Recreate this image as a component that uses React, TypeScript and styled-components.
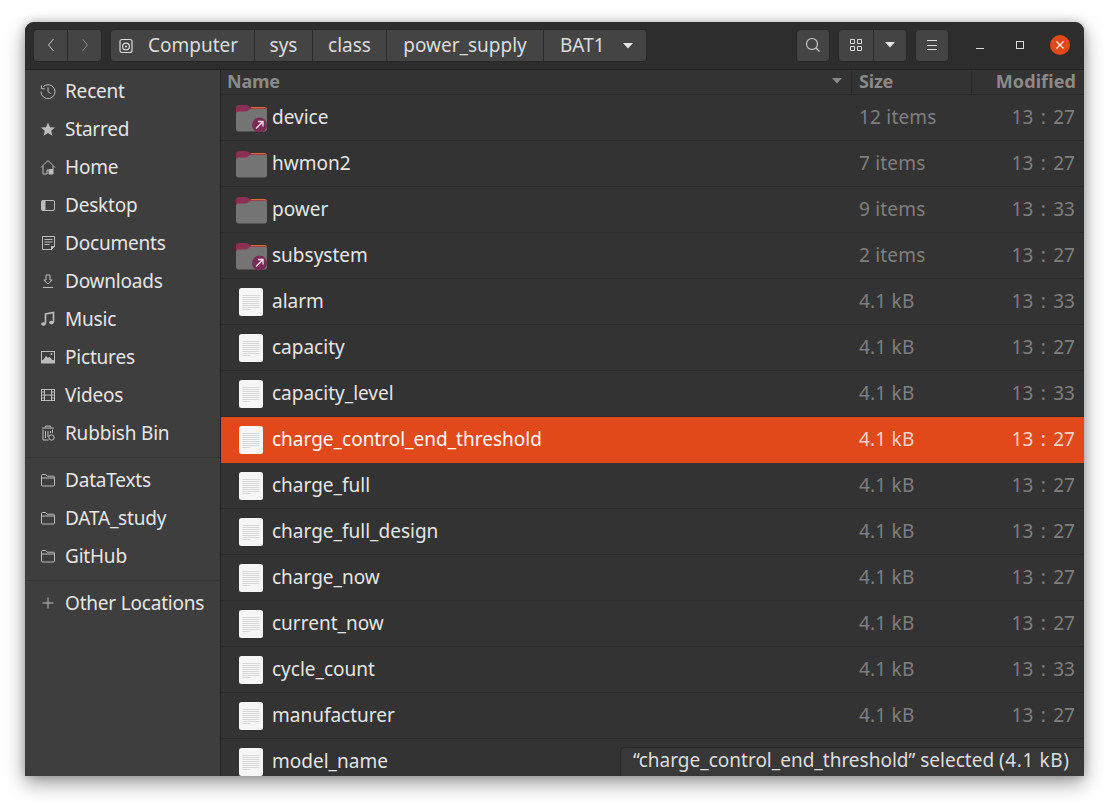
import React from "react";
import styled, { createGlobalStyle, css } from "styled-components";

const Global = createGlobalStyle`
  html, body { margin: 0; padding: 0; background: #fff; }
  body { width: 1109px; height: 804px; overflow: hidden; font-family: "Noto Sans", "Liberation Sans", sans-serif; }
  #root { width: 1109px; height: 804px; }
`;

const Desktop = styled.div`
  width: 1109px;
  height: 804px;
  padding: 22px 25px 28px 25px;
  box-sizing: border-box;
  background: #fff;
`;
const WindowFrame = styled.div`
  width: 1059px;
  height: 754px;
  border-radius: 9px 9px 0 0;
  box-shadow: 0 7px 20px rgba(0,0,0,.4), 0 0 8px rgba(0,0,0,.2);
`;
const Window = styled.div`
  position: relative;
  width: 1059px;
  height: 754px;
  border-radius: 9px 9px 0 0;
  overflow: hidden;
  display: flex;
  flex-direction: column;
  background: #333;
`;
const HeaderBar = styled.header`
  height: 48px;
  flex: none;
  box-sizing: border-box;
  display: flex;
  align-items: center;
  background: #2d2d2d;
  border-bottom: 1px solid #202020;
  padding: 0 14px 1px 8px;
`;
const Group = styled.div<{ $ml?: number }>`
  display: flex;
  height: 33px;
  margin-left: ${p => p.$ml ?? 0}px;
  border-radius: 4px;
  background: #444;
  border: 1px solid #272727;
  box-sizing: border-box;
  overflow: hidden;
`;
const ToolButton = styled.div<{ $w: number; $divider?: boolean }>`
  width: ${p => p.$w}px;
  display: flex;
  align-items: center;
  justify-content: center;
  ${p => p.$divider && css`border-right: 1px solid #2a2a2a;`}
`;
const Crumb = styled.div<{ $w: number; $last?: boolean; $pad?: number }>`
  width: ${p => p.$w}px;
  box-sizing: border-box;
  display: flex;
  align-items: center;
  justify-content: ${p => p.$pad ? "flex-start" : "center"};
  padding: 0 0 0 ${p => p.$pad ?? 0}px;
  font-size: 19px;
  color: #dcdcdc;
  ${p => !p.$last && css`border-right: 1px solid #2a2a2a;`}
`;
const CrumbIconWrap = styled.span`
  display: flex;
  margin: 1px 15px 0 0;
`;
const CaretWrap = styled.span`
  display: flex;
  margin: 1px 0 0 18px;
`;
const Spacer = styled.div`flex: 1;`;
const WinControls = styled.div`
  display: flex;
  align-items: center;
  margin-left: 27px;
  width: 94px;
`;
const WinGlyph = styled.span<{ $ml?: number }>`
  display: flex;
  margin-left: ${p => p.$ml ?? 0}px;
`;
const CloseDot = styled.div`
  width: 20px;
  height: 20px;
  margin-left: 26px;
  border-radius: 50%;
  background: #e2491a;
  display: flex;
  align-items: center;
  justify-content: center;
`;
const Body = styled.div`
  flex: 1;
  min-height: 0;
  display: flex;
`;
const Sidebar = styled.nav`
  width: 196px;
  flex: none;
  box-sizing: border-box;
  background: #3e3e3e;
  border-right: 1px solid #222;
  padding-top: 2px;
`;
const SideItem = styled.div`
  height: 38px;
  display: flex;
  align-items: center;
  padding-left: 14px;
  gap: 9px;
  font-size: 19px;
  letter-spacing: -0.2px;
  color: #e6e6e6;
  white-space: nowrap;
`;
const SideIcon = styled.span`
  width: 17px;
  display: flex;
  justify-content: center;
  flex: none;
`;
const SideSep = styled.div`
  height: 1px;
  margin: 5px 0 3px;
  background: #343434;
`;
const Main = styled.main`
  flex: 1;
  min-width: 0;
  display: flex;
  flex-direction: column;
  background: #333;
`;
const ColHeads = styled.div`
  height: 25px;
  flex: none;
  box-sizing: border-box;
  display: flex;
  border-bottom: 1px solid #282828;
  font-size: 18px;
  font-weight: 700;
  color: #8a8a8a;
`;
const ColHead = styled.div<{ $w?: number; $right?: boolean }>`
  ${p => p.$w ? css`width: ${p.$w}px; flex: none;` : css`flex: 1;`}
  box-sizing: border-box;
  display: flex;
  align-items: center;
  justify-content: ${p => p.$right ? "flex-end" : "space-between"};
  padding: 0 ${p => p.$right ? 8 : 9}px 2px 7px;
  letter-spacing: ${p => p.$right ? 0.1 : -0.2}px;
  border-right: 1px solid #292929;
  &:last-child { border-right: 0; }
`;
const NameHead = styled(ColHead)`
  padding-left: 6px;
`;
const Rows = styled.div`
  flex: 1;
  min-height: 0;
  overflow: hidden;
`;
const Row = styled.div<{ $sel?: boolean }>`
  height: 46px;
  box-sizing: border-box;
  display: flex;
  align-items: center;
  font-size: 19px;
  border-bottom: 1px solid ${p => p.$sel ? "transparent" : "#2b2b2b"};
  color: ${p => p.$sel ? "#fff" : "#e6e6e6"};
  background: ${p => p.$sel ? "#e2491a" : "transparent"};
`;
const IconCell = styled.div`
  width: 51px;
  flex: none;
  padding-left: 15px;
  box-sizing: border-box;
  display: flex;
`;
const NameCell = styled.div`
  flex: 1;
  min-width: 0;
  padding-bottom: 2px;
`;
const SizeCell = styled.div<{ $sel?: boolean }>`
  width: 120px;
  flex: none;
  box-sizing: border-box;
  padding: 0 0 2px 7px;
  letter-spacing: 0.2px;
  color: ${p => p.$sel ? "#f4d5c8" : "#7f7f7f"};
`;
const TimeCell = styled.div<{ $sel?: boolean }>`
  width: 112px;
  flex: none;
  box-sizing: border-box;
  padding: 0 9px 2px 0;
  text-align: right;
  color: ${p => p.$sel ? "#f4d5c8" : "#7f7f7f"};
  word-spacing: 2.5px;
`;
const Floating = styled.div`
  position: absolute;
  right: 0;
  bottom: 0;
  width: 464px;
  height: 29px;
  box-sizing: border-box;
  background: #383838;
  border: 1px solid #262626;
  border-right: 0;
  border-bottom: 0;
  border-top-left-radius: 5px;
  font-size: 19px;
  color: #dedede;
  line-height: 25px;
  padding-left: 12px;
  white-space: nowrap;
`;
const FloatSize = styled.span`
  letter-spacing: 0.6px;
`;

const S = "#bdbdbd";
const Stroke = { fill: "none", stroke: S, strokeWidth: 1 } as const;

const Ic = ({ children, w = 16, h = 16 }: { children: React.ReactNode; w?: number; h?: number }) => (
  <svg width={w} height={h} viewBox={`0 0 ${w} ${h}`} style={{ display: "block" }}>{children}</svg>
);

const icons: Record<string, React.ReactNode> = {
  recent: <Ic><path d="M3.2 3.6A7 7 0 1 1 1 8.5" {...Stroke} /><path d="M1.5 2.5v3.3h3.3" {...Stroke} /><path d="M8 4.2v4.4l2.7 2" {...Stroke} /></Ic>,
  star: <Ic><path d="M8 1.6l2 4.6 5 .4-3.8 3.2 1.2 4.9L8 12.1l-4.4 2.6 1.2-4.9L1 6.6l5-.4z" fill={S} /></Ic>,
  home: <Ic><path d="M1 8.5L8 1.5l7 7" {...Stroke} /><path d="M3 7v8h4V11h2v4h4V7" {...Stroke} /><rect x="9" y="10" width="4" height="5" fill={S} /></Ic>,
  desktop: <Ic><rect x="1.5" y="3.5" width="13" height="10" rx="1.5" {...Stroke} /><rect x="1.5" y="3.5" width="4" height="10" fill={S} /></Ic>,
  docs: <Ic><path d="M2.5 1.5h12v10l-3 3h-9z" {...Stroke} /><path d="M4.5 4.5h8M4.5 7h8M4.5 9.5h5" {...Stroke} /><path d="M11 15v-4h4z" fill={S} /></Ic>,
  down: <Ic><path d="M6 2h4v5h2.2L8 11 3.8 7H6z" {...Stroke} /><path d="M3 14.5h10" {...Stroke} /></Ic>,
  music: <Ic><path d="M5.5 12.5V3l8-1.5V11" {...Stroke} strokeWidth={1.6} /><ellipse cx="3.5" cy="13" rx="2.4" ry="1.8" fill={S} /><ellipse cx="11.5" cy="11.6" rx="2.4" ry="1.8" fill={S} /></Ic>,
  pics: <Ic><rect x="1" y="2" width="14" height="12.5" fill={S} /><rect x="2" y="3" width="12" height="8" fill="#3e3e3e" /><path d="M3 11l3-4 2 2 1.4-1.2L12.5 11z" fill={S} /><circle cx="11.5" cy="5" r="1" fill={S} /></Ic>,
  videos: <Ic><rect x="1.5" y="2.5" width="13" height="11" {...Stroke} /><path d="M4.5 2.5v11M11.5 2.5v11M4.5 8h7M1.5 5h3M1.5 8h3M1.5 11h3M11.5 5h3M11.5 8h3M11.5 11h3" {...Stroke} /></Ic>,
  trash: <Ic><path d="M5.5 2.5V1h5v1.5M2 3h12" {...Stroke} /><path d="M3 4.5V15h5.5M12.5 4.5V8" {...Stroke} /><path d="M5.5 6v7M8 6v6M10.5 6v2" {...Stroke} /><circle cx="11.5" cy="12.5" r="2.7" {...Stroke} /></Ic>,
  folder: <Ic><path d="M1.5 13V3.5c0-.6.4-1 1-1h3.2l1.5 1.7h6.3c.6 0 1 .4 1 1V13c0 .6-.4 1-1 1h-11c-.6 0-1-.4-1-1z" {...Stroke} /><path d="M1.5 6h13" {...Stroke} /></Ic>,
  plus: <Ic><path d="M8 2.5v11M2.5 8h11" {...Stroke} /></Ic>,
};

const FolderIcon = ({ link }: { link?: boolean }) => (
  <svg width="31" height="28" viewBox="0 0 31 28" style={{ display: "block" }}>
    <path d="M0 4c0-2 1-3 3-3h7c2 0 2.500 2 5 2h13c2 0 3 1 3 3v5H0z" fill="#8c2f55" />
    <path d="M15 3h13c2 0 3 1 3 2.500V6c0-1-1-1.700-2.500-1.700H15z" fill="#e0692f" />
    <path d="M0 10c0-1.500 1-2.500 2.500-2.500h7.500c2 0 2.500-2 4.500-2.500H29c1.300 0 2 .7 2 2v18c0 1.500-1 2.500-2.500 2.500h-26C1 27.500 0 26.500 0 25z" fill="#747474" />
    {link && <>
      <circle cx="23.500" cy="21" r="7.500" fill="#7c2a58" />
      <path d="M20 24.500l6.500-6.500M22 17.500h5v5" fill="none" stroke="#f2e6ec" strokeWidth="1.300" />
    </>}
  </svg>
);

const FileIcon = () => (
  <svg width="24" height="28" viewBox="0 0 24 28" style={{ display: "block", marginLeft: 3 }}>
    <rect width="24" height="28" rx="2.500" fill="#f6f6f6" />
    <path d="M3.500 7.500h17M3.500 9.500h17M3.500 11.500h17M3.500 13.500h17M3.500 15.500h17M3.500 17.500h17M3.500 19.500h17M3.500 21.500h8" stroke="#d8d8d8" strokeWidth="1" />
  </svg>
);

const side1 = [["recent","Recent"],["star","Starred"],["home","Home"],["desktop","Desktop"],["docs","Documents"],["down","Downloads"],["music","Music"],["pics","Pictures"],["videos","Videos"],["trash","Rubbish Bin"]];
const side2 = ["DataTexts","DATA_study","GitHub"];

type F = { n: string; k: "f" | "l" | "d"; s: string; t: string; sel?: boolean };
const files: F[] = [
  { n: "device", k: "l", s: "12 items", t: "13 : 27" },
  { n: "hwmon2", k: "f", s: "7 items", t: "13 : 27" },
  { n: "power", k: "f", s: "9 items", t: "13 : 33" },
  { n: "subsystem", k: "l", s: "2 items", t: "13 : 27" },
  { n: "alarm", k: "d", s: "4.1 kB", t: "13 : 33" },
  { n: "capacity", k: "d", s: "4.1 kB", t: "13 : 27" },
  { n: "capacity_level", k: "d", s: "4.1 kB", t: "13 : 33" },
  { n: "charge_control_end_threshold", k: "d", s: "4.1 kB", t: "13 : 27", sel: true },
  { n: "charge_full", k: "d", s: "4.1 kB", t: "13 : 27" },
  { n: "charge_full_design", k: "d", s: "4.1 kB", t: "13 : 27" },
  { n: "charge_now", k: "d", s: "4.1 kB", t: "13 : 27" },
  { n: "current_now", k: "d", s: "4.1 kB", t: "13 : 27" },
  { n: "cycle_count", k: "d", s: "4.1 kB", t: "13 : 33" },
  { n: "manufacturer", k: "d", s: "4.1 kB", t: "13 : 27" },
  { n: "model_name", k: "d", s: "", t: "" },
];

export default function App() {
  return (
    <Desktop>
      <Global />
      <WindowFrame>
        <Window>
          <HeaderBar>
            <Group>
              <ToolButton $w={33} $divider>
                <Ic w={10} h={16}><path d="M7.500 2L2.500 8l5 6" fill="none" stroke="#c8c8c8" strokeWidth="1" /></Ic>
              </ToolButton>
              <ToolButton $w={33}>
                <Ic w={10} h={16}><path d="M2.500 2l5 6-5 6" fill="none" stroke="#8a8a8a" strokeWidth="1" /></Ic>
              </ToolButton>
            </Group>
            <Group $ml={8}>
              <Crumb $w={144} $pad={8}>
                <CrumbIconWrap>
                  <Ic w={14} h={16}><rect x="1" y="1.500" width="12" height="13" rx="2" fill="none" stroke="#dcdcdc" strokeWidth="1.200" /><circle cx="7" cy="8.500" r="3.400" fill="none" stroke="#dcdcdc" strokeWidth="1.200" /><circle cx="7" cy="8.500" r="1" fill="#dcdcdc" /></Ic>
                </CrumbIconWrap>
                Computer
              </Crumb>
              <Crumb $w={58}>sys</Crumb>
              <Crumb $w={74}>class</Crumb>
              <Crumb $w={157}>power_supply</Crumb>
              <Crumb $w={102} $last $pad={16}>
                BAT1
                <CaretWrap><svg width="10" height="6" viewBox="0 0 10 6"><path d="M0 0h10L5 5.500z" fill="#e6e6e6" /></svg></CaretWrap>
              </Crumb>
            </Group>
            <Spacer />
            <Group>
              <ToolButton $w={32}>
                <Ic><circle cx="7" cy="7" r="5.500" fill="none" stroke="#d4d4d4" strokeWidth="1.100" /><path d="M11 11l3.500 3.500" stroke="#d4d4d4" strokeWidth="1.300" /></Ic>
              </ToolButton>
            </Group>
            <Group $ml={8}>
              <ToolButton $w={34} $divider>
                <Ic w={14} h={14}><path d="M1.500 1.500h4v4h-4zM8.500 1.500h4v4h-4zM1.500 8.500h4v4h-4zM8.500 8.500h4v4h-4z" fill="none" stroke="#dcdcdc" /></Ic>
              </ToolButton>
              <ToolButton $w={32}>
                <svg width="10" height="6" viewBox="0 0 10 6"><path d="M0 0h10L5 5.500z" fill="#e6e6e6" /></svg>
              </ToolButton>
            </Group>
            <Group $ml={8}>
              <ToolButton $w={32}>
                <Ic w={12} h={12}><path d="M1 1.500h10M1 6.500h10M1 10.500h10" stroke="#dcdcdc" /></Ic>
              </ToolButton>
            </Group>
            <WinControls>
              <WinGlyph><Ic w={8} h={16}><path d="M0 11.500h8" stroke="#ddd" strokeWidth="1" /></Ic></WinGlyph>
              <WinGlyph $ml={32}><Ic w={8} h={8}><rect x="0.500" y="0.500" width="7" height="7" fill="none" stroke="#ddd" /></Ic></WinGlyph>
              <CloseDot>
                <Ic w={10} h={10}><path d="M1.500 1.500l7 7M8.500 1.500l-7 7" stroke="#fff" strokeWidth="1.100" /></Ic>
              </CloseDot>
            </WinControls>
          </HeaderBar>
          <Body>
            <Sidebar>
              {side1.map(([k, l]) => (
                <SideItem key={l}><SideIcon>{icons[k]}</SideIcon>{l}</SideItem>
              ))}
              <SideSep />
              {side2.map(l => (
                <SideItem key={l}><SideIcon>{icons.folder}</SideIcon>{l}</SideItem>
              ))}
              <SideSep />
              <SideItem><SideIcon>{icons.plus}</SideIcon>Other Locations</SideItem>
            </Sidebar>
            <Main>
              <ColHeads>
                <NameHead>
                  Name
                  <svg width="10" height="6" viewBox="0 0 10 6"><path d="M0 0h10L5 5.500z" fill="#8a8a8a" /></svg>
                </NameHead>
                <ColHead $w={120}>Size</ColHead>
                <ColHead $w={112} $right>Modified</ColHead>
              </ColHeads>
              <Rows>
                {files.map(f => (
                  <Row key={f.n} $sel={f.sel}>
                    <IconCell>{f.k === "d" ? <FileIcon /> : <FolderIcon link={f.k === "l"} />}</IconCell>
                    <NameCell>{f.n}</NameCell>
                    <SizeCell $sel={f.sel}>{f.s}</SizeCell>
                    <TimeCell $sel={f.sel}>{f.t}</TimeCell>
                  </Row>
                ))}
              </Rows>
            </Main>
          </Body>
          <Floating>“charge_control_end_threshold” selected <FloatSize>(4.1 kB)</FloatSize></Floating>
        </Window>
      </WindowFrame>
    </Desktop>
  );
}
